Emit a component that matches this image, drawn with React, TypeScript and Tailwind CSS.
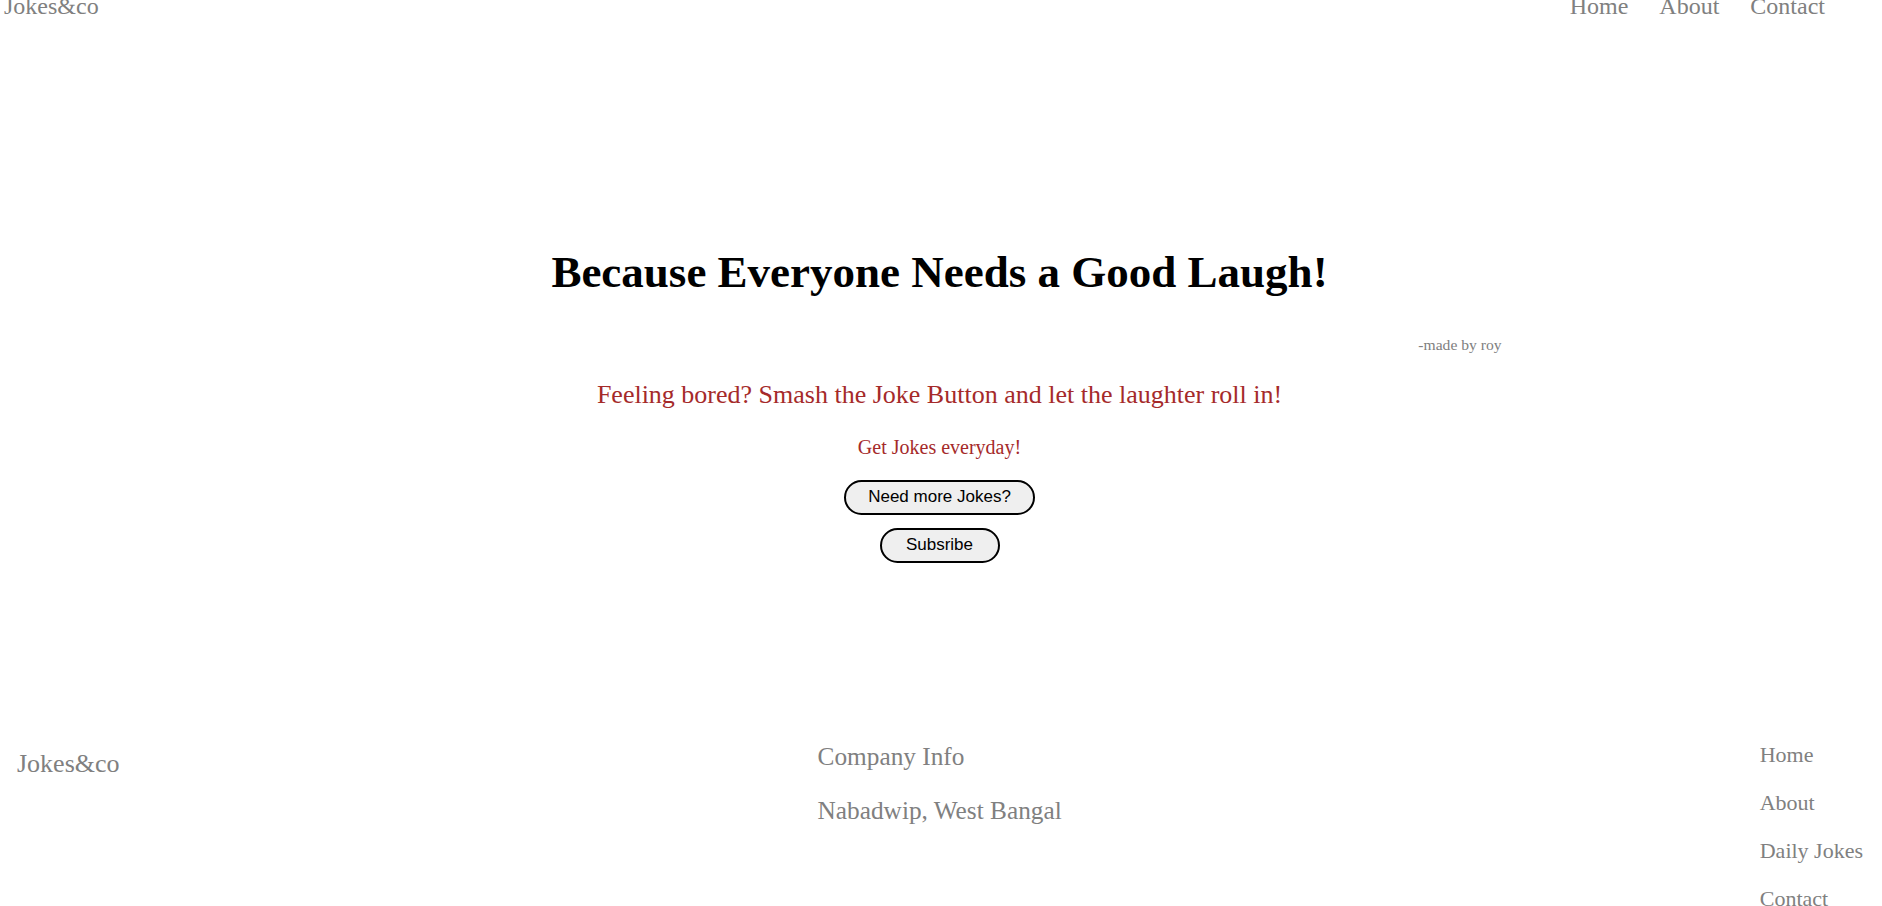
import React from "react";

export default function App() {
  return (
    <div className="min-h-screen bg-white font-['Liberation_Serif','Times_New_Roman',serif] leading-[normal]">
      <header className="-mt-[7px] flex items-start justify-between pl-[4px] pr-[57px] text-[24px] text-[#808080]">
        <div>Jokes&amp;co</div>
        <nav className="flex gap-[31px]">
          <a>Home</a>
          <a>About</a>
          <a>Contact</a>
        </nav>
      </header>

      <main className="flex flex-col items-center pr-[3px]">
        <h1 className="mt-[226px] text-center text-[45px] font-bold text-black">
          Because Everyone Needs a Good Laugh!
        </h1>
        <div className="mt-[38px] w-[1124px] text-right text-[15.6px] text-[#808080]">
          -made by roy
        </div>
        <p className="mt-[25.5px] text-center text-[26px] text-[#a52a2a]">
          Feeling bored? Smash the Joke Button and let the laughter roll in!
        </p>
        <p className="mt-[26px] text-center text-[20px] text-[#a52a2a]">
          Get Jokes everyday!
        </p>
        <button className="mt-[21px] flex h-[35px] w-[191px] items-center justify-center rounded-full border-2 border-black bg-[#efefef] font-['Liberation_Sans',Arial,sans-serif] text-[17px] text-black">
          Need more Jokes?
        </button>
        <button className="mt-[13px] flex h-[35px] w-[120px] items-center justify-center rounded-full border-2 border-black bg-[#efefef] font-['Liberation_Sans',Arial,sans-serif] text-[17px] text-black">
          Subsribe
        </button>
      </main>

      <footer className="mt-[179px] flex items-start justify-between pl-[17px] pr-[19px] text-[#808080]">
        <div className="mt-[7px] text-[26px]">Jokes&amp;co</div>
        <div className="flex flex-col gap-[25.5px] text-[25.3px]">
          <p>Company Info</p>
          <p>Nabadwip, West Bangal</p>
        </div>
        <ul className="flex flex-col gap-[22px] text-[22px]">
          <li>Home</li>
          <li>About</li>
          <li>Daily Jokes</li>
          <li>Contact</li>
        </ul>
      </footer>
    </div>
  );
}
